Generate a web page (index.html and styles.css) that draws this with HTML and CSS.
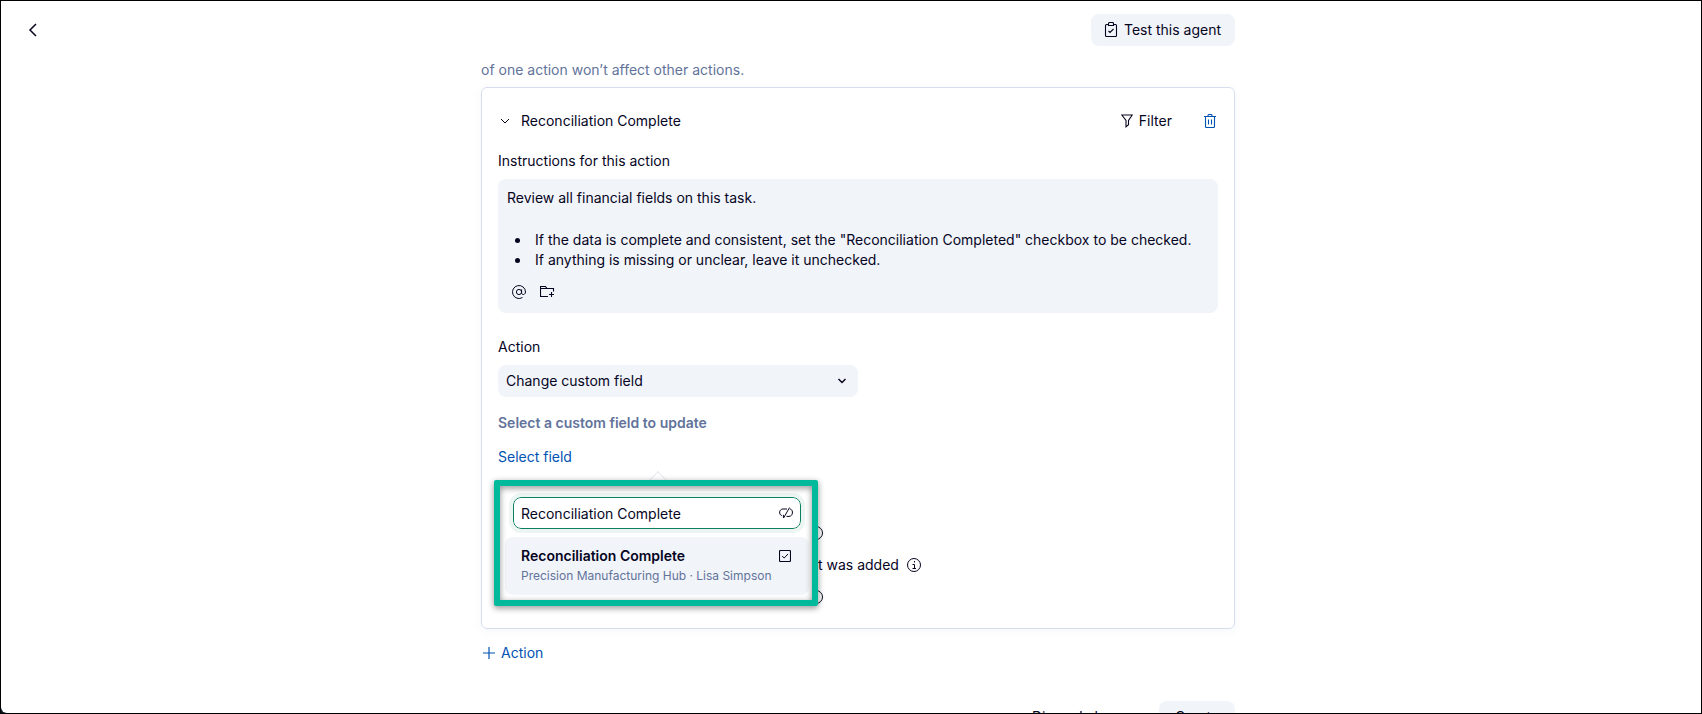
FILE: index.html
```html
<!DOCTYPE html>
<html lang="en">
<head>
<meta charset="utf-8">
<meta name="viewport" content="width=device-width, initial-scale=1">
<title>Agent actions</title>
<link rel="stylesheet" href="styles.css">
</head>
<body>
<div class="page">
  <header class="topbar">
    <button class="icon-button back" type="button" aria-label="Back">
      <svg width="10" height="16" viewBox="0 0 10 16"><path d="M8 2 2 8l6 6" stroke-width="1.5"/></svg>
    </button>
    <div class="column topbar-column">
      <button class="button" type="button">
        <svg width="14" height="16" viewBox="0 0 14 16"><path d="M4.500 2.500h-2a1 1 0 0 0-1 1v10a1 1 0 0 0 1 1h9a1 1 0 0 0 1-1v-10a1 1 0 0 0-1-1h-2M4.500 1.500a1 1 0 0 1 1-1h3a1 1 0 0 1 1 1v2h-5zM4.500 9l1.500 1.500 3.500-3.500" stroke-width="1.100"/></svg>
        Test this agent
      </button>
    </div>
  </header>

  <main class="content">
    <div class="column">
      <p class="hint">of one action won’t affect other actions.</p>

      <section class="card">
        <div class="card-head">
          <button class="card-title" type="button" aria-expanded="true">
            <svg width="10" height="6" viewBox="0 0 10 6"><path d="m1 1 4 4 4-4"/></svg>
            Reconciliation Complete
          </button>
          <div class="card-tools">
            <button class="link-button" type="button">
              <svg width="12" height="14" viewBox="0 0 12 14"><path d="M.8 1h10.400L7.500 6.500v4.200L5 12.800V6.500z" stroke-width="1.100"/></svg>
              Filter
            </button>
            <button class="icon-button delete" type="button" aria-label="Delete action">
              <svg width="12" height="14" viewBox="0 0 12 14"><path d="M0 2.500h12M4 2.500v-1a1 1 0 0 1 1-1h2a1 1 0 0 1 1 1v1M1.500 2.500v10a1 1 0 0 0 1 1h7a1 1 0 0 0 1-1v-10M4.500 5.500v5M7.500 5.500v5" stroke-width="1.100"/></svg>
            </button>
          </div>
        </div>

        <p class="label">Instructions for this action</p>
        <div class="editor">
          <p class="line">Review all financial fields on this task.</p>
          <ul class="list">
            <li>If the data is complete and consistent, set the "Reconciliation Completed" checkbox to be checked.</li>
            <li>If anything is missing or unclear, leave it unchecked.</li>
          </ul>
          <div class="editor-tools">
            <button class="icon-button" type="button" aria-label="Mention">
              <svg width="14" height="14" viewBox="0 0 14 14"><circle cx="7" cy="7" r="2.600"/><path d="M9.600 4.400v3.400c0 2.600 3.900 2.200 3.900-.8A6.500 6.500 0 1 0 10.500 12.500"/></svg>
            </button>
            <button class="icon-button" type="button" aria-label="Add folder">
              <svg width="15" height="14" viewBox="0 0 15 14"><path d="M8 11.500H.5v-10h5l1.500 2h6.500v3M.5 3.500H7M11.500 7v5M9 9.500h5" stroke-width="1.100"/></svg>
            </button>
          </div>
        </div>

        <label class="label action-label" for="action">Action</label>
        <div class="select-wrap">
          <select class="select" id="action"><option>Change custom field</option></select>
          <svg class="select-arrow" width="10" height="6" viewBox="0 0 10 6"><path d="m1.500 1 3.500 3.500L8.500 1" stroke-width="1.500"/></svg>
        </div>

        <h2 class="subhead">Select a custom field to update</h2>
        <div class="field-picker">
          <button class="link-button blue" type="button">Select field</button>
          <div class="popover">
            <div class="search">
              <input class="search-input" type="text" aria-label="Search fields" value="Reconciliation Complete">
              <svg class="search-icon" width="14" height="12" viewBox="0 0 14 12"><path d="M8 2H4C0 2-.5 7.500 2.800 8.600M10.500.6 4.600 11M4.400 7.800V11M10.800 2c3.600 0 3.700 7.400-.8 7.400H7.500"/></svg>
            </div>
            <button class="option" type="button">
              <span class="option-title">Reconciliation Complete</span>
              <svg width="12" height="12" viewBox="0 0 12 12"><rect x=".5" y=".5" width="11" height="11" rx="1" stroke-width="1.100"/><path d="m3.200 6.200 2 1.800 3.800-4"/></svg>
              <span class="option-meta">Precision Manufacturing Hub · Lisa Simpson</span>
            </button>
          </div>
        </div>

        <div class="notes">
          <div class="note">
            <svg width="14" height="14" viewBox="0 0 14 14"><circle cx="7" cy="7" r="6.500"/></svg>
          </div>
          <div class="note note-text">
            t was added
            <svg width="14" height="14" viewBox="0 0 14 14"><circle cx="7" cy="7" r="6.500"/><path d="M5.500 6.500h2v4M5.500 10.500h3.500M7.500 3v1.500"/></svg>
          </div>
          <div class="note">
            <svg width="14" height="14" viewBox="0 0 14 14"><circle cx="7" cy="7" r="6.500"/></svg>
          </div>
        </div>
      </section>

      <button class="link-button blue add" type="button">
        <svg width="12" height="12" viewBox="0 0 12 12"><path d="M6 0v12M0 6h12" stroke-width="1.200"/></svg>
        Action
      </button>

      <footer class="footer">
        <button class="button plain" type="button">Discard changes</button>
        <button class="button" type="button">Create</button>
      </footer>
    </div>
  </main>
</div>
</body>
</html>
```

FILE: styles.css
```css
:root {
  --ink: #06051f;
  --muted: #62739b;
  --blue: #0053b3;
  --panel: #f1f4f9;
  --line: #d6deee;
  --green: #00ba9b;
}

* { box-sizing: border-box; }

html { background: #0c1a24; }

body {
  margin: 0;
  height: 100vh;
  overflow: hidden;
  border: 1px solid #000;
  color: var(--ink);
  font: 14px/20px Inter, "Liberation Sans", sans-serif;
}

button, input, select {
  margin: 0;
  padding: 0;
  border: 0;
  background: none;
  color: inherit;
  font: inherit;
}

svg {
  display: block;
  flex: none;
  fill: none;
  stroke: currentColor;
}

p, h2, ul { margin: 0; }

.page {
  height: 100%;
  overflow: hidden;
  background: #fff;
  border-bottom-left-radius: 6px;
}

.column {
  width: 100%;
  max-width: 754px;
  margin: 0 auto;
}

.topbar {
  display: grid;
  padding: 13px 0 14px 14px;
}

.topbar > * { grid-area: 1 / 1; }

.topbar-column {
  display: flex;
  justify-content: flex-end;
}

.icon-button { display: flex; }

.back {
  align-self: center;
  justify-self: start;
  padding: 0 13px;
  z-index: 1;
}

.button {
  display: flex;
  align-items: center;
  gap: 6px;
  height: 32px;
  padding: 0 14px 0 13px;
  border-radius: 8px;
  background: var(--panel);
}

.content { padding-left: 14px; }

.hint {
  color: var(--muted);
  padding-bottom: 7px;
}

.card {
  padding: 17px 16px 16px;
  border: 1px solid var(--line);
  border-radius: 6px;
  box-shadow: 0 2px 8px rgba(40, 80, 140, .05);
}

.card-head {
  display: flex;
  justify-content: space-between;
  align-items: center;
  height: 32px;
}

.card-title {
  display: flex;
  align-items: center;
  gap: 11px;
  padding-left: 2px;
}

.card-tools {
  display: flex;
  align-items: center;
  gap: 32px;
}

.link-button {
  display: flex;
  align-items: center;
  gap: 6px;
}

.blue { color: var(--blue); }

.delete {
  color: var(--blue);
  padding-right: 2px;
}

.label {
  display: block;
  padding: 14px 0 8px;
}

.editor {
  padding: 9px;
  border-radius: 8px;
  background: var(--panel);
}

.list {
  padding: 22px 0 0 8px;
  list-style: none;
}

.list li {
  display: flex;
  gap: 15px;
}

.list li::before {
  content: "";
  flex: none;
  width: 5px;
  height: 5px;
  margin-top: 8px;
  border-radius: 50%;
  background: currentColor;
}

.editor-tools {
  display: flex;
  gap: 14px;
  padding: 15px 5px 5px;
}

.action-label { padding-top: 24px; }

.select-wrap {
  display: grid;
  align-items: center;
  max-width: 360px;
}

.select-wrap > * { grid-area: 1 / 1; }

.select {
  appearance: none;
  width: 100%;
  height: 32px;
  padding: 0 8px;
  border-radius: 8px;
  background: var(--panel);
}

.select-arrow {
  justify-self: end;
  margin-right: 11px;
  pointer-events: none;
}

.subhead {
  padding: 16px 0 14px;
  color: var(--muted);
  font-size: 14px;
  font-weight: 600;
}

.field-picker { position: relative; }

.popover {
  position: absolute;
  top: 33px;
  left: -4px;
  width: 324px;
  padding: 17px 9px 11px 11px;
  background: #fff;
}

.popover::before {
  content: "";
  position: absolute;
  top: -6px;
  left: 157px;
  width: 12px;
  height: 12px;
  border: 1px solid #e9ebf0;
  border-right-color: transparent;
  border-bottom-color: transparent;
  background: #fff;
  transform: rotate(45deg);
}

.popover::after {
  content: "";
  position: absolute;
  inset: 0;
  border: 6px solid var(--green);
  border-radius: 2px;
  filter: drop-shadow(0 2px 3px rgba(0, 0, 0, .45));
  pointer-events: none;
}

.search {
  position: relative;
  display: grid;
  align-items: center;
  margin: 0 8px 8px;
}

.search > * { grid-area: 1 / 1; }

.search-input {
  width: 100%;
  height: 32px;
  padding: 0 32px 0 7px;
  border: 1px solid #0d8060;
  border-radius: 8px;
  outline: 4px solid #edf5f3;
}

.search-icon {
  justify-self: end;
  margin-right: 8px;
}

.option {
  display: grid;
  grid-template-columns: 1fr auto;
  align-items: center;
  width: 100%;
  padding: 9px 18px 9px 16px;
  border-radius: 8px;
  background: var(--panel);
  text-align: left;
}

.option-title { font-weight: 600; }

.option-meta {
  grid-column: 1 / -1;
  color: var(--muted);
  font-size: 12px;
}

.notes {
  display: grid;
  gap: 12px;
  padding: 56px 0 5px 311px;
}

.note {
  display: flex;
  align-items: center;
  gap: 8px;
  height: 20px;
}

.note-text { padding-left: 9px; }

.add { padding: 14px 2px; }

.footer {
  display: flex;
  justify-content: flex-end;
  padding-top: 24px;
}

.footer .button { padding: 0 16px; }

.button.plain { background: none; }
```
